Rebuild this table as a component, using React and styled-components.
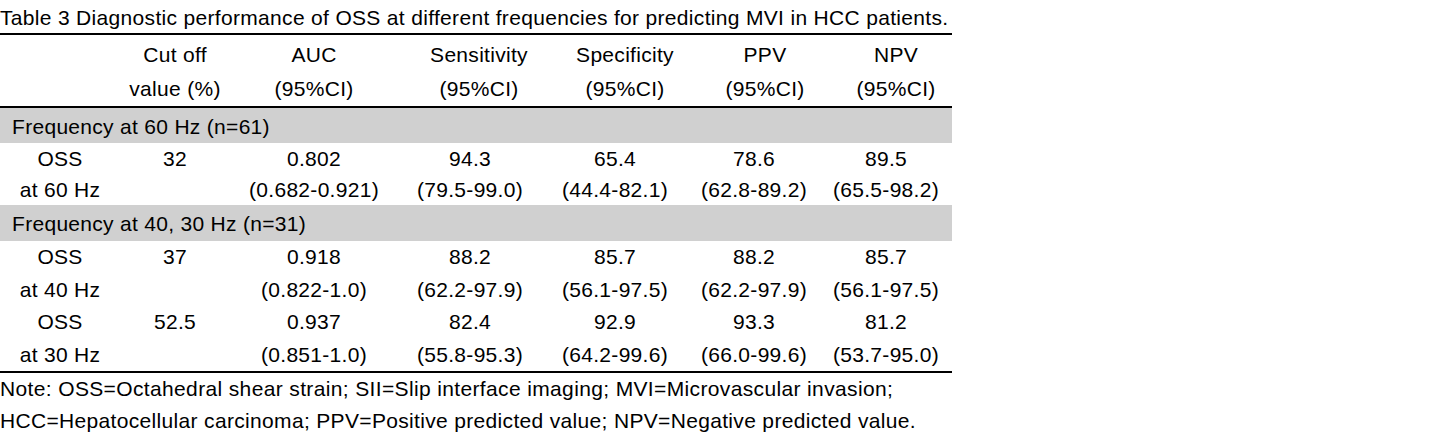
import React from "react";
import styled, { createGlobalStyle } from "styled-components";

const Global = createGlobalStyle`
  html, body { margin: 0; padding: 0; background: #fff; }
  body { font-family: "Liberation Sans", Arial, sans-serif; color: #000; }
`;

const HEAD_COLS = "120px 110px 168px 162px 130px 150px 112px";
const BODY_COLS = "120px 110px 168px 144px 146px 132px 132px";

const Page = styled.div`
  width: 952px;
  font-size: 21px;
  letter-spacing: 0.3px;
`;

const Caption = styled.div`
  padding-top: 3px;
  line-height: 30px;
  height: 33px;
  box-sizing: border-box;
  white-space: nowrap;
  letter-spacing: 0.32px;
`;

const Table = styled.div`
  border-top: 2px solid #000;
  border-bottom: 2px solid #000;
`;

const Head = styled.div`
  padding-top: 3px;
  border-bottom: 2px solid #000;
`;

const Row = styled.div`
  display: grid;
  grid-template-columns: ${(p) => (p.$head ? HEAD_COLS : BODY_COLS)};
  line-height: ${(p) => p.$h}px;
  height: ${(p) => p.$h}px;
`;

const Cell = styled.div`
  text-align: center;
  white-space: nowrap;
`;

const Band = styled.div`
  background: #d0d0d0;
  height: ${(p) => p.$h}px;
  line-height: ${(p) => p.$h - 2}px;
  padding-left: 12px;
  padding-top: 2px;
  box-sizing: border-box;
`;

const Note = styled.div`
  line-height: 32px;
  white-space: nowrap;
  letter-spacing: ${(p) => p.$ls}px;
`;

const header = [
  ["", "Cut off", "AUC", "Sensitivity", "Specificity", "PPV", "NPV"],
  ["", "value (%)", "(95%CI)", "(95%CI)", "(95%CI)", "(95%CI)", "(95%CI)"],
];

const groups = [
  {
    label: "Frequency at 60 Hz (n=61)",
    bandH: 35,
    rowH: 31,
    rows: [
      ["OSS", "32", "0.802", "94.3", "65.4", "78.6", "89.5"],
      ["at 60 Hz", "", "(0.682-0.921)", "(79.5-99.0)", "(44.4-82.1)", "(62.8-89.2)", "(65.5-98.2)"],
    ],
  },
  {
    label: "Frequency at 40, 30 Hz (n=31)",
    bandH: 36,
    rowH: 32.5,
    rows: [
      ["OSS", "37", "0.918", "88.2", "85.7", "88.2", "85.7"],
      ["at 40 Hz", "", "(0.822-1.0)", "(62.2-97.9)", "(56.1-97.5)", "(62.2-97.9)", "(56.1-97.5)"],
      ["OSS", "52.5", "0.937", "82.4", "92.9", "93.3", "81.2"],
      ["at 30 Hz", "", "(0.851-1.0)", "(55.8-95.3)", "(64.2-99.6)", "(66.0-99.6)", "(53.7-95.0)"],
    ],
  },
];

export default function App() {
  return (
    <Page>
      <Global />
      <Caption>
        Table 3 Diagnostic performance of OSS at different frequencies for predicting MVI in HCC patients.
      </Caption>
      <Table>
        <Head>
          {header.map((r, i) => (
            <Row key={i} $head $h={34}>
              {r.map((c, j) => (
                <Cell key={j}>{c}</Cell>
              ))}
            </Row>
          ))}
        </Head>
        {groups.map((g, gi) => (
          <React.Fragment key={gi}>
            <Band $h={g.bandH}>{g.label}</Band>
            {g.rows.map((r, i) => (
              <Row key={i} $h={g.rowH}>
                {r.map((c, j) => (
                  <Cell key={j}>{c}</Cell>
                ))}
              </Row>
            ))}
          </React.Fragment>
        ))}
      </Table>
      <Note $ls={0.36}>Note: OSS=Octahedral shear strain; SII=Slip interface imaging; MVI=Microvascular invasion;</Note>
      <Note $ls={0.33}>HCC=Hepatocellular carcinoma; PPV=Positive predicted value; NPV=Negative predicted value.</Note>
    </Page>
  );
}
